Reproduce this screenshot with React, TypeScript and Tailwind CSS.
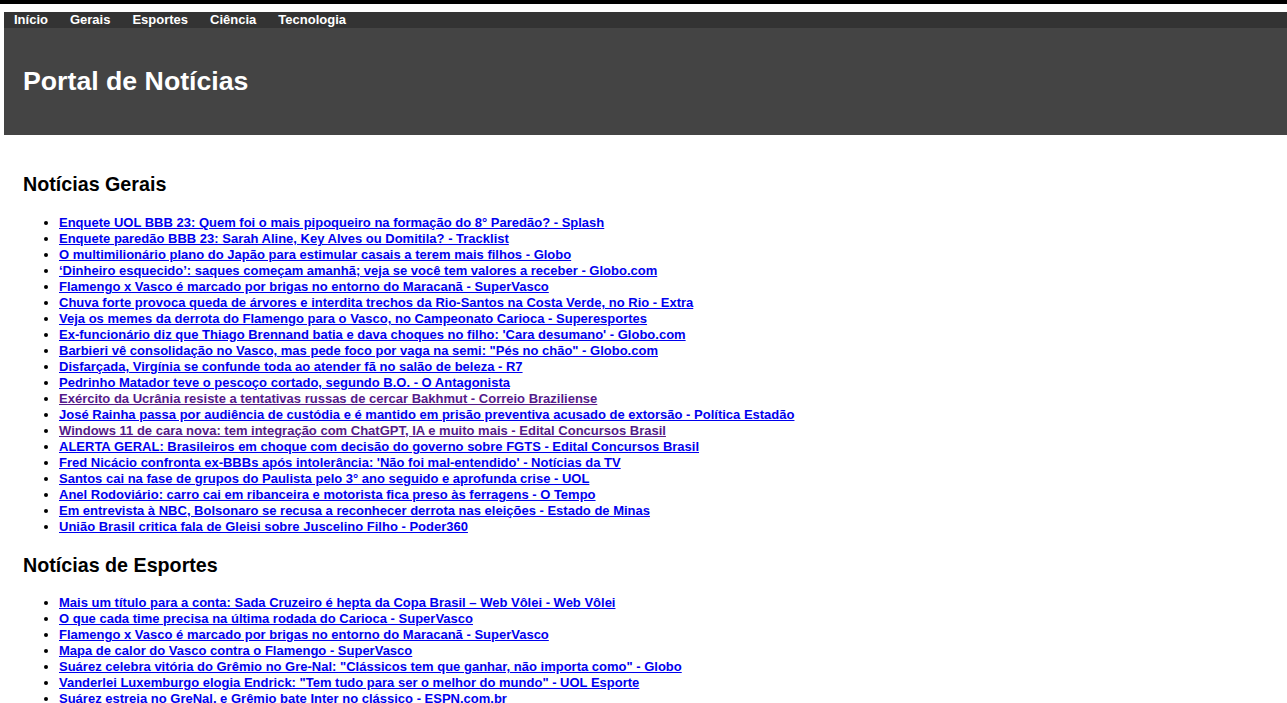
import React from "react";

const gerais: [string, boolean][] = [
  ["Enquete UOL BBB 23: Quem foi o mais pipoqueiro na formação do 8° Paredão? - Splash", false],
  ["Enquete paredão BBB 23: Sarah Aline, Key Alves ou Domitila? - Tracklist", false],
  ["O multimilionário plano do Japão para estimular casais a terem mais filhos - Globo", false],
  ["‘Dinheiro esquecido’: saques começam amanhã; veja se você tem valores a receber - Globo.com", false],
  ["Flamengo x Vasco é marcado por brigas no entorno do Maracanã - SuperVasco", false],
  ["Chuva forte provoca queda de árvores e interdita trechos da Rio-Santos na Costa Verde, no Rio - Extra", false],
  ["Veja os memes da derrota do Flamengo para o Vasco, no Campeonato Carioca - Superesportes", false],
  ["Ex-funcionário diz que Thiago Brennand batia e dava choques no filho: 'Cara desumano' - Globo.com", false],
  ["Barbieri vê consolidação no Vasco, mas pede foco por vaga na semi: \"Pés no chão\" - Globo.com", false],
  ["Disfarçada, Virgínia se confunde toda ao atender fã no salão de beleza - R7", false],
  ["Pedrinho Matador teve o pescoço cortado, segundo B.O. - O Antagonista", false],
  ["Exército da Ucrânia resiste a tentativas russas de cercar Bakhmut - Correio Braziliense", true],
  ["José Rainha passa por audiência de custódia e é mantido em prisão preventiva acusado de extorsão - Política Estadão", false],
  ["Windows 11 de cara nova: tem integração com ChatGPT, IA e muito mais - Edital Concursos Brasil", true],
  ["ALERTA GERAL: Brasileiros em choque com decisão do governo sobre FGTS - Edital Concursos Brasil", false],
  ["Fred Nicácio confronta ex-BBBs após intolerância: 'Não foi mal-entendido' - Notícias da TV", false],
  ["Santos cai na fase de grupos do Paulista pelo 3° ano seguido e aprofunda crise - UOL", false],
  ["Anel Rodoviário: carro cai em ribanceira e motorista fica preso às ferragens - O Tempo", false],
  ["Em entrevista à NBC, Bolsonaro se recusa a reconhecer derrota nas eleições - Estado de Minas", false],
  ["União Brasil critica fala de Gleisi sobre Juscelino Filho - Poder360", false],
];

const esportes: [string, boolean][] = [
  ["Mais um título para a conta: Sada Cruzeiro é hepta da Copa Brasil – Web Vôlei - Web Vôlei", false],
  ["O que cada time precisa na última rodada do Carioca - SuperVasco", false],
  ["Flamengo x Vasco é marcado por brigas no entorno do Maracanã - SuperVasco", false],
  ["Mapa de calor do Vasco contra o Flamengo - SuperVasco", false],
  ["Suárez celebra vitória do Grêmio no Gre-Nal: \"Clássicos tem que ganhar, não importa como\" - Globo", false],
  ["Vanderlei Luxemburgo elogia Endrick: \"Tem tudo para ser o melhor do mundo\" - UOL Esporte", false],
  ["Suárez estreia no GreNal, e Grêmio bate Inter no clássico - ESPN.com.br", false],
];

function NewsList({ items }: { items: [string, boolean][] }) {
  return (
    <ul className="list-disc pl-[36px] ml-[19px]">
      {items.map(([t, visited], i) => (
        <li key={i} className="h-[16px] leading-[16px] text-[13px] font-bold">
          <a
            href="#"
            className={`underline ${visited ? "text-[#551a8b]" : "text-[#0000ee]"}`}
          >
            {t}
          </a>
        </li>
      ))}
    </ul>
  );
}

export default function App() {
  return (
    <div className="bg-white min-h-[703px] font-['Liberation_Sans',Arial,sans-serif]">
      <div className="h-[4px] bg-black" />
      <div className="h-[8px] bg-white" />
      <div className="ml-[4px]">
        <nav className="bg-[#333333] h-[16px] flex items-center pl-[10px] gap-[22px]">
          {["Início", "Gerais", "Esportes", "Ciência", "Tecnologia"].map((n) => (
            <a key={n} href="#" className="text-white text-[13px] font-bold leading-[16px]">
              {n}
            </a>
          ))}
        </nav>
        <header className="bg-[#444444] h-[107px] flex items-center pl-[19px]">
          <h1 className="text-white text-[26.7px] font-bold">Portal de Notícias</h1>
        </header>
        <main>
          <h2 className="text-[19.7px] font-bold text-black ml-[19px] mt-[37px] mb-[19px] leading-[24px]">
            Notícias Gerais
          </h2>
          <NewsList items={gerais} />
          <h2 className="text-[19.7px] font-bold text-black ml-[19px] mt-[18px] mb-[18px] leading-[24px]">
            Notícias de Esportes
          </h2>
          <NewsList items={esportes} />
        </main>
      </div>
    </div>
  );
}
